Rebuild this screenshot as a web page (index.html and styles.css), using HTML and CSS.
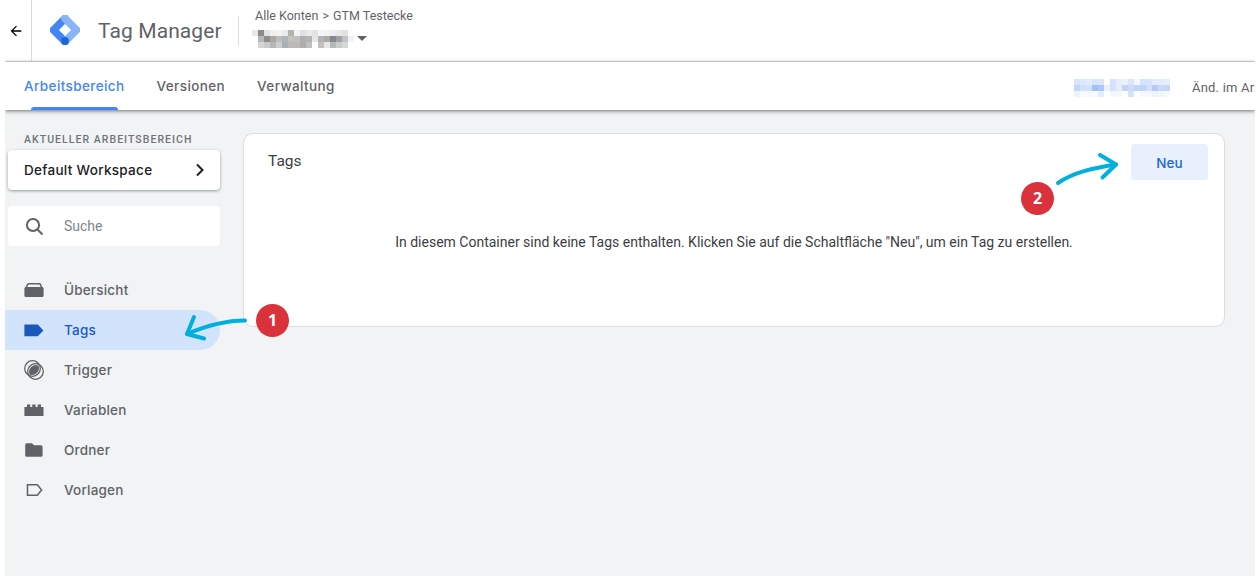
FILE: index.html
```html
<!DOCTYPE html>
<html lang="de">
<head>
<meta charset="utf-8">
<title>Tag Manager</title>
<link rel="stylesheet" href="styles.css">
</head>
<body>
<div class="page">
  <header class="topbar">
    <div class="back">
      <svg class="back-icon" viewBox="0 0 24 24" width="16" height="16"><path d="M20 11H7.8l5.6-5.6L12 4l-8 8 8 8 1.4-1.4L7.8 13H20z"/></svg>
    </div>
    <svg class="logo" viewBox="0 0 30 30" width="30" height="30">
      <path class="logo-dark" d="M15 3.5 3.5 15 15 26.5"/>
      <path class="logo-light" d="M15 3.5 26.5 15 15 26.5"/>
      <circle class="logo-dot" cx="15" cy="26" r="3.9"/>
    </svg>
    <div class="product">Tag Manager</div>
    <div class="context">
      <div class="crumb">Alle Konten <span class="crumb-sep">&gt;</span> GTM Testecke</div>
      <div class="context-row">
        <svg class="blur" viewBox="0 0 17 3" width="102" height="18" shape-rendering="crispEdges">
          <rect x="0" y="0" width="1" height="1" fill="#e9e6e3"/><rect x="1" y="0" width="1" height="1" fill="#8a8a8a"/><rect x="2" y="0" width="1" height="1" fill="#dfe3e6"/><rect x="3" y="0" width="1" height="1" fill="#eef0f0"/><rect x="4" y="0" width="1" height="1" fill="#f3f3f1"/><rect x="5" y="0" width="1" height="1" fill="#e8eaeb"/><rect x="6" y="0" width="1" height="1" fill="#b5b2ae"/><rect x="7" y="0" width="1" height="1" fill="#f0f2f3"/><rect x="8" y="0" width="1" height="1" fill="#e0e1e2"/><rect x="9" y="0" width="1" height="1" fill="#e8eaea"/><rect x="10" y="0" width="1" height="1" fill="#e2e4e2"/><rect x="11" y="0" width="1" height="1" fill="#f3f4f5"/><rect x="12" y="0" width="1" height="1" fill="#f1f3f4"/><rect x="13" y="0" width="1" height="1" fill="#eceeef"/><rect x="14" y="0" width="1" height="1" fill="#e9e9e9"/><rect x="15" y="0" width="1" height="1" fill="#e1e1df"/><rect x="16" y="0" width="1" height="1" fill="#fafbfb"/>
          <rect x="1" y="1" width="1" height="1" fill="#b4b8bb"/><rect x="2" y="1" width="1" height="1" fill="#8e8c8b"/><rect x="3" y="1" width="1" height="1" fill="#aaa8a6"/><rect x="4" y="1" width="1" height="1" fill="#bdbcba"/><rect x="5" y="1" width="1" height="1" fill="#aeb4b8"/><rect x="6" y="1" width="1" height="1" fill="#c3c2bf"/><rect x="7" y="1" width="1" height="1" fill="#c2c0bf"/><rect x="8" y="1" width="1" height="1" fill="#afafae"/><rect x="9" y="1" width="1" height="1" fill="#b3b3b4"/><rect x="10" y="1" width="1" height="1" fill="#e6e6e6"/><rect x="11" y="1" width="1" height="1" fill="#b2b5b5"/><rect x="12" y="1" width="1" height="1" fill="#b0aaa5"/><rect x="13" y="1" width="1" height="1" fill="#86888f"/><rect x="14" y="1" width="1" height="1" fill="#9fa1a5"/><rect x="15" y="1" width="1" height="1" fill="#c0c3c5"/><rect x="16" y="1" width="1" height="1" fill="#f2f2f2"/>
          <rect x="1" y="2" width="1" height="1" fill="#d5d5d3"/><rect x="2" y="2" width="1" height="1" fill="#c9c9c7"/><rect x="3" y="2" width="1" height="1" fill="#b3b7b9"/><rect x="4" y="2" width="1" height="1" fill="#cfcdcb"/><rect x="5" y="2" width="1" height="1" fill="#a9b0b4"/><rect x="6" y="2" width="1" height="1" fill="#bdb9b6"/><rect x="7" y="2" width="1" height="1" fill="#bcb8b5"/><rect x="8" y="2" width="1" height="1" fill="#aeacac"/><rect x="9" y="2" width="1" height="1" fill="#c0c0c3"/><rect x="11" y="2" width="1" height="1" fill="#c5bfba"/><rect x="12" y="2" width="1" height="1" fill="#e2e8eb"/><rect x="13" y="2" width="1" height="1" fill="#b4b8bb"/><rect x="14" y="2" width="1" height="1" fill="#c9cccd"/><rect x="15" y="2" width="1" height="1" fill="#d6d7d7"/>
        </svg>
        <svg class="caret" viewBox="0 0 10 5" width="10" height="5"><path d="M0 0h10L5 5z"/></svg>
      </div>
    </div>
  </header>

  <nav class="tabs">
    <a class="tab tab-active">Arbeitsbereich</a>
    <a class="tab">Versionen</a>
    <a class="tab">Verwaltung</a>
    <svg class="blur blur-user" viewBox="0 0 16 3" width="96" height="18" shape-rendering="crispEdges">
      <rect x="0" y="0" width="1" height="1" fill="#d8e5fb"/><rect x="1" y="0" width="1" height="1" fill="#dde8fb"/><rect x="2" y="0" width="1" height="1" fill="#e2ebfc"/><rect x="3" y="0" width="1" height="1" fill="#d8e4fb"/><rect x="4" y="0" width="1" height="1" fill="#dbe6fb"/><rect x="6" y="0" width="1" height="1" fill="#d3e3fc"/><rect x="7" y="0" width="1" height="1" fill="#e8edfb"/><rect x="8" y="0" width="1" height="1" fill="#eef2fb"/><rect x="9" y="0" width="1" height="1" fill="#dbe5fb"/><rect x="10" y="0" width="1" height="1" fill="#f6f6fe"/><rect x="11" y="0" width="1" height="1" fill="#d6e4fb"/><rect x="12" y="0" width="1" height="1" fill="#d6e4fb"/><rect x="13" y="0" width="1" height="1" fill="#e6ecfb"/><rect x="14" y="0" width="1" height="1" fill="#e4ebfb"/><rect x="15" y="0" width="1" height="1" fill="#e6eefc"/>
      <rect x="0" y="1" width="1" height="1" fill="#c3d7f9"/><rect x="1" y="1" width="1" height="1" fill="#d2e1fa"/><rect x="2" y="1" width="1" height="1" fill="#d2e1fa"/><rect x="3" y="1" width="1" height="1" fill="#a2c0f5"/><rect x="4" y="1" width="1" height="1" fill="#a9c7f8"/><rect x="5" y="1" width="1" height="1" fill="#e9f1fc"/><rect x="6" y="1" width="1" height="1" fill="#d2e3fb"/><rect x="7" y="1" width="1" height="1" fill="#e7ebfa"/><rect x="8" y="1" width="1" height="1" fill="#c3d3f7"/><rect x="9" y="1" width="1" height="1" fill="#ced9f7"/><rect x="10" y="1" width="1" height="1" fill="#c0d6f9"/><rect x="11" y="1" width="1" height="1" fill="#bcd4fa"/><rect x="12" y="1" width="1" height="1" fill="#d4e0fa"/><rect x="13" y="1" width="1" height="1" fill="#b7c9f6"/><rect x="14" y="1" width="1" height="1" fill="#c6daf9"/><rect x="15" y="1" width="1" height="1" fill="#c4d9fa"/>
      <rect x="0" y="2" width="1" height="1" fill="#eef3fd"/><rect x="1" y="2" width="1" height="1" fill="#f6f9fe"/><rect x="2" y="2" width="1" height="1" fill="#f5f8fe"/><rect x="3" y="2" width="1" height="1" fill="#f6f9fe"/><rect x="4" y="2" width="1" height="1" fill="#e4edfc"/><rect x="6" y="2" width="1" height="1" fill="#f3f7fe"/><rect x="7" y="2" width="1" height="1" fill="#f3f7fe"/><rect x="9" y="2" width="1" height="1" fill="#d4e2fa"/><rect x="11" y="2" width="1" height="1" fill="#f7f8fe"/><rect x="12" y="2" width="1" height="1" fill="#f5f7fe"/><rect x="13" y="2" width="1" height="1" fill="#eef3fd"/><rect x="14" y="2" width="1" height="1" fill="#f1f6fe"/><rect x="15" y="2" width="1" height="1" fill="#f5f8fe"/>
    </svg>
    <div class="changes">Änd. im Arbeitsbereich: 0</div>
  </nav>

  <div class="workspace">
    <aside class="sidebar">
      <div class="side-label">AKTUELLER ARBEITSBEREICH</div>
      <div class="ws-card">
        <span>Default Workspace</span>
        <svg class="chevron" viewBox="0 0 10 14" width="10" height="14"><path d="M2 1.5 7.5 7 2 12.5"/></svg>
      </div>
      <div class="search">
        <svg class="search-icon" viewBox="0 0 24 24" width="24" height="24"><circle cx="11" cy="11" r="6.100"/><path d="M15.500 15.500 20.500 20.500"/></svg>
        <span>Suche</span>
      </div>
      <ul class="nav">
        <li class="nav-item">
          <svg class="nav-icon" viewBox="0 0 20 20" width="20" height="20"><path class="ic-line" d="M2 8.5 3.4 4.7Q3.8 3.8 5 3.8H15Q16.2 3.8 16.6 4.7L18 8.5"/><rect class="ic-fill" x=".4" y="7" width="19.2" height="10" rx="1.6"/></svg>
          Übersicht
        </li>
        <li class="nav-item nav-active">
          <svg class="nav-icon" viewBox="0 0 20 20" width="20" height="20"><path class="ic-blue" d="M.4 4.6H13.8L19.4 10.500 13.800 16.300H.4z"/></svg>
          Tags
        </li>
        <li class="nav-item">
          <svg class="nav-icon" viewBox="0 0 20 20" width="20" height="20"><circle class="ic-thin" cx="8.500" cy="8.500" r="7.800"/><circle class="ic-thin" cx="11.500" cy="11.500" r="7.800"/><path class="ic-fill" d="M14.410 5.590A6.800 6.800 0 0 1 5.590 14.410 6.800 6.800 0 0 1 14.410 5.590z"/></svg>
          Trigger
        </li>
        <li class="nav-item">
          <svg class="nav-icon" viewBox="0 0 20 20" width="20" height="20"><path class="ic-fill" d="M.4 16V7H3V4.400H6.300V7H8.300V4.400H11.600V7H13.700V4.400H17V7H19.500V16z"/></svg>
          Variablen
        </li>
        <li class="nav-item">
          <svg class="nav-icon" viewBox="0 0 20 20" width="20" height="20"><path class="ic-fill" d="M2.800 3.300H8L10 5.300H17Q18.600 5.300 18.600 6.900V15.200Q18.600 16.800 17 16.800H2.800Q1.200 16.800 1.200 15.200V4.900Q1.200 3.300 2.800 3.300z"/></svg>
          Ordner
        </li>
        <li class="nav-item">
          <svg class="nav-icon" viewBox="0 0 20 20" width="20" height="20"><path class="ic-line" d="M3.500 4.800H13.300L17.600 10 13.300 15.200H3.500z"/></svg>
          Vorlagen
        </li>
      </ul>
    </aside>
    <main class="card">
      <div class="card-head">
        <h1 class="card-title">Tags</h1>
        <button class="btn-new">Neu</button>
      </div>
      <p class="card-msg">In diesem Container sind keine Tags enthalten. Klicken Sie auf die Schaltfläche "Neu", um ein Tag zu erstellen.</p>
    </main>
  </div>
</div>

<svg class="arrows" viewBox="0 0 1260 576" width="1260" height="576">
  <path d="M245 320.500C226 320.500 208 325 187 334"/>
  <path d="M194 317 187 334 204 338.500"/>
  <path d="M1058 183C1074 172 1094 168 1116 164.500"/>
  <path d="M1100 155 1116 164.500 1102.500 177.500"/>
</svg>
<div class="badge badge-one">1</div>
<div class="badge badge-two">2</div>
</body>
</html>
```
FILE: styles.css
```css
* { box-sizing: border-box; }

html, body {
  margin: 0;
  height: 576px;
  overflow: hidden;
  background: #fff;
}

body {
  position: relative;
  font-family: Roboto, "Liberation Sans", sans-serif;
  color: #202124;
}

.page {
  width: 1250px;
  height: 576px;
  margin: 0 5px;
  display: flex;
  flex-direction: column;
  overflow: hidden;
}

/* top bar */
.topbar {
  height: 62px;
  flex: none;
  display: flex;
  align-items: flex-start;
  border-bottom: 1px solid #dadce0;
}

.back {
  width: 27px;
  height: 61px;
  flex: none;
  border-right: 1px solid #dadce0;
  display: flex;
  align-items: center;
  padding-left: 3px;
}

.back-icon { fill: #000; display: block; }

.logo {
  flex: none;
  margin: 15px 0 0 18px;
  fill: none;
}

.logo-dark, .logo-light {
  fill: none;
  stroke-width: 7.600;
  stroke-linejoin: round;
  stroke-linecap: round;
}
.logo-dark { stroke: #4285f4; }
.logo-light { stroke: #8ab4f8; }
.logo-dot { fill: #1a66d2; }

.product {
  margin: 16px 0 0 18px;
  width: 141px;
  height: 30px;
  border-right: 1px solid #dadce0;
  font-size: 21px;
  line-height: 30px;
  color: #5f6368;
  white-space: nowrap;
  letter-spacing: .1px;
}

.context { margin-left: 16px; padding-top: 9px; }

.crumb {
  font-size: 12.500px;
  line-height: 14px;
  color: #5f6368;
}

.crumb-sep { margin: 0 1px; }

.context-row {
  display: flex;
  align-items: center;
  margin: 7px 0 0 -3px;
}

.blur { display: block; flex: none; }

.caret {
  margin: -1px 0 0 3px;
  fill: #5f6368;
}

/* tabs */
.tabs {
  position: relative;
  z-index: 2;
  height: 48px;
  flex: none;
  display: flex;
  align-items: center;
  padding-left: 19px;
  background: #fff;
  box-shadow: 0 1px 4px rgba(0, 0, 0, .55);
}

.tab {
  position: relative;
  height: 48px;
  margin-right: 32px;
  font: 500 13.500px/48px Inter, Roboto, sans-serif;
  letter-spacing: .4px;
  color: #5f6368;
}

.tab-active { color: #4285f4; }

.tab-active::after {
  content: "";
  position: absolute;
  left: 7px;
  right: 7px;
  bottom: 0;
  height: 3px;
  border-radius: 3px 3px 0 0;
  background: #4285f4;
}

.blur-user { margin: 3px 0 0 auto; }

.changes {
  width: 63px;
  margin-left: 22px;
  overflow: hidden;
  font-size: 13px;
  letter-spacing: .2px;
  color: #5f6368;
  white-space: nowrap;
  flex: none;
  padding-top: 2px;
}

/* content */
.workspace {
  flex: 1;
  display: flex;
  align-items: flex-start;
  background: #f1f3f4;
  padding-top: 23px;
}

.sidebar {
  width: 238px;
  flex: none;
}

.side-label {
  font-size: 10.500px;
  font-weight: 500;
  line-height: 14px;
  letter-spacing: 1.050px;
  color: #70757a;
  margin: 0 0 3px 19px;
}

.ws-card {
  width: 212px;
  height: 40px;
  margin-left: 3px;
  display: flex;
  align-items: center;
  justify-content: space-between;
  padding: 0 15px 0 16px;
  background: #fff;
  border-radius: 4px;
  box-shadow: 0 1px 3px rgba(60, 64, 67, .5);
  font: 500 13.500px Inter, Roboto, sans-serif;
  letter-spacing: .3px;
}

.chevron { fill: none; stroke: #202124; stroke-width: 2; }

.search {
  width: 212px;
  height: 40px;
  margin: 16px 0 0 3px;
  display: flex;
  align-items: center;
  gap: 18px;
  padding-left: 14px;
  background: #fff;
  border-radius: 4px;
  font-size: 14px;
  color: #80868b;
}

.search-icon {
  fill: none;
  stroke: #5f6368;
  stroke-width: 2;
}

.nav {
  list-style: none;
  margin: 24px 0 0;
  padding: 0;
}

.nav-item {
  width: 215px;
  height: 40px;
  display: flex;
  align-items: center;
  gap: 20px;
  padding-left: 19px;
  font: 500 13.500px Inter, Roboto, sans-serif;
  letter-spacing: .2px;
  color: #5f6368;
}

.nav-active {
  background: #d2e3fc;
  border-radius: 0 20px 20px 0;
  color: #185abc;
}

.nav-icon { flex: none; }

.ic-fill { fill: #5f6368; }
.ic-blue { fill: #185abc; }
.ic-line { fill: none; stroke: #5f6368; stroke-width: 1.500; }
.ic-thin { fill: none; stroke: #5f6368; stroke-width: 1.300; }

.card {
  width: 982px;
  height: 194px;
  background: #fff;
  border: 1px solid #dadce0;
  border-radius: 10px;
}

.card-head {
  display: flex;
  justify-content: space-between;
  padding: 10px 16px 0 24px;
}

.card-title {
  margin: 7px 0 0;
  font-size: 15.500px;
  font-weight: 400;
  line-height: 20px;
  color: #3c4043;
}

.btn-new {
  width: 77px;
  height: 36px;
  padding: 2px 0 0;
  border: 0;
  border-radius: 3px;
  background: #e8f0fe;
  color: #1a66d2;
  font: 500 13.500px Inter, Roboto, sans-serif;
}

.card-msg {
  margin: 52px 0 0;
  font-size: 14px;
  line-height: 20px;
  text-align: center;
  color: #3c4043;
}

/* annotations */
.arrows {
  position: absolute;
  left: 0;
  top: 0;
  z-index: 3;
  fill: none;
  stroke: #00b0dc;
  stroke-width: 4;
  stroke-linecap: round;
  stroke-linejoin: round;
  pointer-events: none;
}

.badge {
  position: absolute;
  z-index: 4;
  width: 33px;
  height: 33px;
  border-radius: 50%;
  background: #d9323a;
  color: #fff;
  font: 700 16px/33px "Open Sans", sans-serif;
  text-align: center;
}

.badge-one { left: 256px; top: 304px; }
.badge-two { left: 1021px; top: 182px; }
```
